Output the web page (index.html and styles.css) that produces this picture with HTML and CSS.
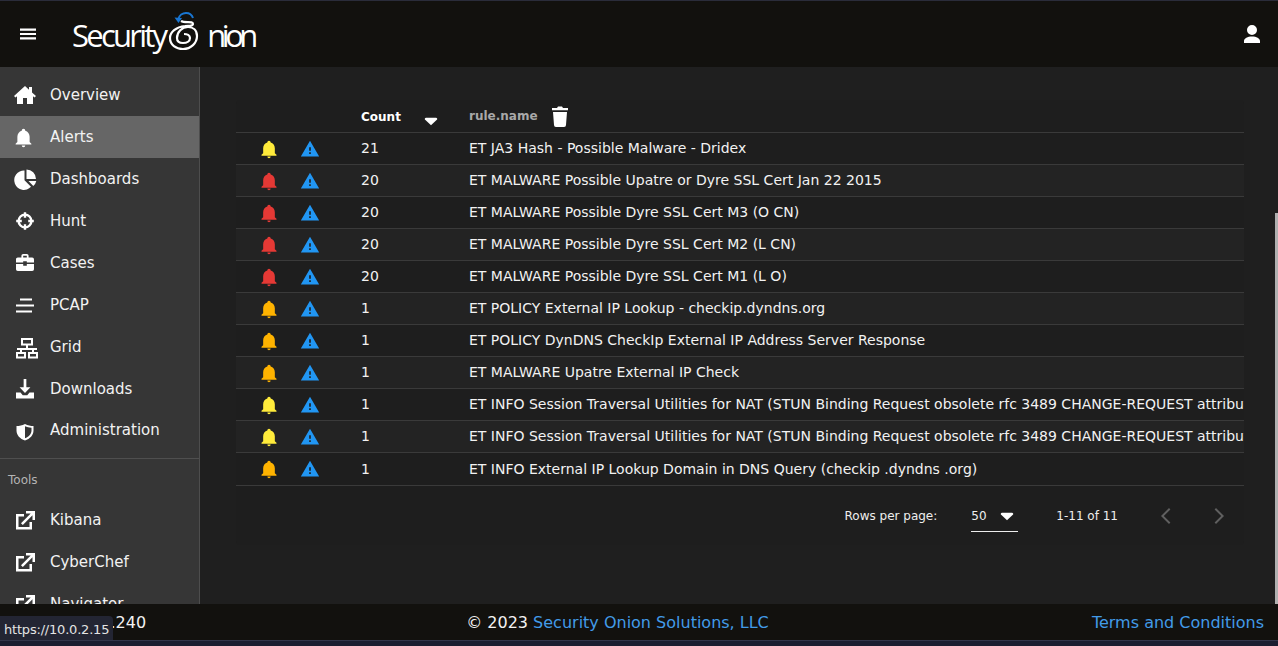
FILE: index.html
```html
<!DOCTYPE html>
<html lang="en">
<head>
<meta charset="utf-8">
<title>Security Onion - Alerts</title>
<link rel="stylesheet" href="styles.css">
</head>
<body>
<svg class="defs" aria-hidden="true">
  <symbol id="i-menu" viewBox="0 0 24 24"><path d="M4 6.500h16v2.200H4zM4 10.900h16v2.200H4zM4 15.300h16v2.200H4z"/></symbol>
  <symbol id="i-user" viewBox="0 0 24 24"><path d="M12 3a5 5 0 1 1 0 10 5 5 0 0 1 0-10zm0 11.500c4.420 0 8 2 8 4.500v2H4v-2c0-2.500 3.580-4.500 8-4.500z"/></symbol>
  <symbol id="i-home" viewBox="0 0 24 24"><path d="M12 3 1 13l1.500 1.500L4 13.200V21h6v-6h4v6h6v-7.800l1.500 1.300L23 13l-4-3.600V4h-3v2.700z"/></symbol>
  <symbol id="i-bell" viewBox="0 0 24 24"><path d="M21 19v1H3v-1l2-2v-6c0-3.100 2.030-5.830 5-6.710V4a2 2 0 1 1 4 0v.29c2.970.88 5 3.610 5 6.710v6l2 2zM14 21a2 2 0 0 1-4 0z"/></symbol>
  <symbol id="i-pie" viewBox="0 0 24 24"><path d="M11.500 3.500v9.800l6.500 6.500a9.700 9.700 0 1 1-6.500-16.300zM13.500 2.500a9.500 9.500 0 0 1 9.500 9.500h-9.500zM15.500 14h7.800a9.700 9.700 0 0 1-3 5z"/></symbol>
  <symbol id="i-cross" viewBox="-3 -3 30 30"><g fill="none" stroke="currentColor" stroke-width="3"><circle cx="12" cy="12" r="8"/><path d="M12 1v7M12 16v7M1 12h7M16 12h7"/></g></symbol>
  <symbol id="i-case" viewBox="-1.330 -1.330 26.670 26.670"><path d="M10 2h4a2 2 0 0 1 2 2v2h4a2 2 0 0 1 2 2v3.500H14V10h-4v1.500H2V8c0-1.110.89-2 2-2h4V4a2 2 0 0 1 2-2zm4 4V4h-4v2zM2 13h8v2h4v-2h8v6a2 2 0 0 1-2 2H4a2 2 0 0 1-2-2z"/></symbol>
  <symbol id="i-lines" viewBox="0 0 24 24"><path d="M7 5.500h12v2H7zM3 11.500h18v2H3zM3 17.500h16v2H3z"/></symbol>
  <symbol id="i-grid" viewBox="0 0 24 24"><g fill="none" stroke="currentColor" stroke-width="2"><rect x="9" y="4" width="10" height="5.500"/><path d="M14 9.500v4.500M8 18v-4h12v4M4 14h20"/><rect x="4" y="18" width="8" height="4.500"/><rect x="16" y="18" width="8" height="4.500"/></g></symbol>
  <symbol id="i-down" viewBox="-1.330 -1.330 26.670 26.670"><path d="M10.500 1h3v9H18l-6 6.500L6 10h4.500zM2 16h5l2.500 3h5l2.500-3h5v6.500H2zm16 3.500h2v1.500h-2z"/></symbol>
  <symbol id="i-shield" viewBox="0 0 24 24"><path fill-rule="evenodd" d="M12 6c-3 1.500-5.500 2-8.500 2v4.500c0 4.500 3.500 8.500 8.500 10 5-1.500 8.500-5.500 8.500-10V8c-3 0-5.500-.5-8.500-2zM12 8.200v12c3.500-1.200 6.500-4.200 6.500-7.700V9.700c-2.500-.2-4.500-.7-6.500-1.500z"/></symbol>
  <symbol id="i-out" viewBox="0 0 24 24"><path d="M13 3v2.500h4.700L8 15.200 9.800 17l9.700-9.700V12H22V3zM3 6v15.500h16V14h-2.500v5h-11V8.500H11V6z"/></symbol>
  <symbol id="i-alert" viewBox="0 0 24 24"><path d="M13 14h-2v-4h2m0 8h-2v-2h2M1 21h22L12 2z"/></symbol>
  <symbol id="i-trash" viewBox="0 0 24 24"><path d="M4 4h5l1-1.500h4L15 4h5v2.300H4zM5 8h14l-1 13a2 2 0 0 1-2 2H8a2 2 0 0 1-2-2z"/></symbol>
  <symbol id="i-left" viewBox="0 0 24 24"><path d="M15.400 5.400 14 4l-8 8 8 8 1.400-1.400L8.800 12z"/></symbol>
  <symbol id="i-right" viewBox="0 0 24 24"><path d="M8.600 5.400 10 4l8 8-8 8-1.400-1.400L15.200 12z"/></symbol>
  <symbol id="i-drop" viewBox="0 0 24 24"><path d="M6 8h12a1.500 1.500 0 0 1 1 2.600l-7 6.400-7-6.400A1.500 1.500 0 0 1 6 8z"/></symbol>
</svg>

<div class="chrome-top"></div>
<header class="topbar">
  <svg class="ic menu-btn"><use href="#i-menu"/></svg>
  <div class="logo">
    <span class="logo-a">Security</span>
    <svg class="spiral" viewBox="0 0 36 42" fill="none">
      <path class="spiral-blue" d="M10 10C11 5 15 3 18 3C21 3 24 5 25 8"/>
      <path class="spiral-tip" d="M6.500 7.500 14 8l-3.500 5z"/>
      <path class="spiral-white" d="M13 11C17 13.500 25 10.500 25 14C25 16.500 20 15.500 17 16C8 17 2 22 2 28C2 35 8 39 15 39C23 39 29 33 29 26C29 20 25 17 20 17C14 17 9 22 9 28C9 31 11 33 15 33C19 33 22 31 22 28C22 25.500 19 24 16 24"/>
    </svg>
    <span class="logo-b">nion</span>
  </div>
  <svg class="ic user-btn"><use href="#i-user"/></svg>
</header>

<div class="middle">
  <nav class="sidebar">
    <a class="nav-item"><svg class="ic"><use href="#i-home"/></svg>Overview</a>
    <a class="nav-item active"><svg class="ic"><use href="#i-bell"/></svg>Alerts</a>
    <a class="nav-item"><svg class="ic"><use href="#i-pie"/></svg>Dashboards</a>
    <a class="nav-item"><svg class="ic"><use href="#i-cross"/></svg>Hunt</a>
    <a class="nav-item"><svg class="ic"><use href="#i-case"/></svg>Cases</a>
    <a class="nav-item"><svg class="ic"><use href="#i-lines"/></svg>PCAP</a>
    <a class="nav-item"><svg class="ic"><use href="#i-grid"/></svg>Grid</a>
    <a class="nav-item"><svg class="ic"><use href="#i-down"/></svg>Downloads</a>
    <a class="nav-item short"><svg class="ic"><use href="#i-shield"/></svg>Administration</a>
    <div class="nav-div"></div>
    <div class="nav-head">Tools</div>
    <a class="nav-item"><svg class="ic"><use href="#i-out"/></svg>Kibana</a>
    <a class="nav-item"><svg class="ic"><use href="#i-out"/></svg>CyberChef</a>
    <a class="nav-item"><svg class="ic"><use href="#i-out"/></svg>Navigator</a>
  </nav>

  <main class="content">
    <div class="scroll-thumb"></div>
    <div class="table-card">
      <div class="row head">
        <span class="c-bell"></span>
        <span class="c-alert"></span>
        <span class="c-count th-on">Count<svg class="ic sort"><use href="#i-drop"/></svg></span>
        <span class="c-name th-off">rule.name<svg class="ic trash"><use href="#i-trash"/></svg></span>
      </div>
      <div class="row"><span class="c-bell"><svg class="ic yellow"><use href="#i-bell"/></svg></span><span class="c-alert"><svg class="ic blue"><use href="#i-alert"/></svg></span><span class="c-count">21</span><span class="c-name">ET JA3 Hash - Possible Malware - Dridex</span></div>
      <div class="row alt"><span class="c-bell"><svg class="ic red"><use href="#i-bell"/></svg></span><span class="c-alert"><svg class="ic blue"><use href="#i-alert"/></svg></span><span class="c-count">20</span><span class="c-name">ET MALWARE Possible Upatre or Dyre SSL Cert Jan 22 2015</span></div>
      <div class="row"><span class="c-bell"><svg class="ic red"><use href="#i-bell"/></svg></span><span class="c-alert"><svg class="ic blue"><use href="#i-alert"/></svg></span><span class="c-count">20</span><span class="c-name">ET MALWARE Possible Dyre SSL Cert M3 (O CN)</span></div>
      <div class="row alt"><span class="c-bell"><svg class="ic red"><use href="#i-bell"/></svg></span><span class="c-alert"><svg class="ic blue"><use href="#i-alert"/></svg></span><span class="c-count">20</span><span class="c-name">ET MALWARE Possible Dyre SSL Cert M2 (L CN)</span></div>
      <div class="row"><span class="c-bell"><svg class="ic red"><use href="#i-bell"/></svg></span><span class="c-alert"><svg class="ic blue"><use href="#i-alert"/></svg></span><span class="c-count">20</span><span class="c-name">ET MALWARE Possible Dyre SSL Cert M1 (L O)</span></div>
      <div class="row alt"><span class="c-bell"><svg class="ic amber"><use href="#i-bell"/></svg></span><span class="c-alert"><svg class="ic blue"><use href="#i-alert"/></svg></span><span class="c-count">1</span><span class="c-name">ET POLICY External IP Lookup - checkip.dyndns.org</span></div>
      <div class="row"><span class="c-bell"><svg class="ic amber"><use href="#i-bell"/></svg></span><span class="c-alert"><svg class="ic blue"><use href="#i-alert"/></svg></span><span class="c-count">1</span><span class="c-name">ET POLICY DynDNS CheckIp External IP Address Server Response</span></div>
      <div class="row alt"><span class="c-bell"><svg class="ic amber"><use href="#i-bell"/></svg></span><span class="c-alert"><svg class="ic blue"><use href="#i-alert"/></svg></span><span class="c-count">1</span><span class="c-name">ET MALWARE Upatre External IP Check</span></div>
      <div class="row"><span class="c-bell"><svg class="ic yellow"><use href="#i-bell"/></svg></span><span class="c-alert"><svg class="ic blue"><use href="#i-alert"/></svg></span><span class="c-count">1</span><span class="c-name">ET INFO Session Traversal Utilities for NAT (STUN Binding Request obsolete rfc 3489 CHANGE-REQUEST attribute)</span></div>
      <div class="row alt"><span class="c-bell"><svg class="ic yellow"><use href="#i-bell"/></svg></span><span class="c-alert"><svg class="ic blue"><use href="#i-alert"/></svg></span><span class="c-count">1</span><span class="c-name">ET INFO Session Traversal Utilities for NAT (STUN Binding Request obsolete rfc 3489 CHANGE-REQUEST attribute)</span></div>
      <div class="row last"><span class="c-bell"><svg class="ic amber"><use href="#i-bell"/></svg></span><span class="c-alert"><svg class="ic blue"><use href="#i-alert"/></svg></span><span class="c-count">1</span><span class="c-name">ET INFO External IP Lookup Domain in DNS Query (checkip .dyndns .org)</span></div>
      <div class="pager">
        <span class="pager-label">Rows per page:</span>
        <span class="pager-select">50<svg class="ic"><use href="#i-drop"/></svg></span>
        <span class="pager-range">1-11 of 11</span>
        <svg class="ic pager-arrow"><use href="#i-left"/></svg>
        <svg class="ic pager-arrow"><use href="#i-right"/></svg>
      </div>
    </div>
  </main>
</div>

<footer class="footer">
  <span class="version">2.4.240</span>
  <span class="copy">© 2023 <a>Security Onion Solutions, LLC</a></span>
  <a class="terms">Terms and Conditions</a>
  <div class="status-tip">https://10.0.2.15</div>
</footer>
<div class="chrome-bottom"></div>
</body>
</html>
```

FILE: styles.css
```css
* { box-sizing: border-box; }
html, body { height: 100%; }
body {
  margin: 0;
  height: 646px;
  overflow: hidden;
  display: flex;
  flex-direction: column;
  background: #1f1f1f;
  color: #f2f2f2;
  font-family: "DejaVu Sans", sans-serif;
  font-size: 14px;
}
.defs { display: none; }
symbol { overflow: visible; }
.ic { display: block; fill: currentColor; flex: none; width: 24px; height: 24px; overflow: visible; }

.chrome-top { height: 1px; background: #2a2c3a; flex: none; }
.chrome-bottom { height: 6px; background: #1b1d30; border-top: 1px solid #33354a; flex: none; }

.topbar {
  flex: none;
  height: 66px;
  display: flex;
  align-items: center;
  padding: 0 14px 0 16px;
  background: #12110e;
  color: #fff;
}
.user-btn { margin-left: auto; }
.logo {
  display: flex;
  align-items: center;
  margin-left: 32px;
  font-family: "Open Sans", sans-serif;
  font-weight: 400;
  font-size: 31px;
  line-height: 36px;
  color: #fff;
  margin-top: 1px;
}
.logo-a { letter-spacing: -2.750px; }
.logo-b { letter-spacing: -4.500px; }
.spiral { flex: none; width: 36px; height: 42px; margin: -7px 3px 0 3px; }
.spiral-blue { stroke: #1976d2; stroke-width: 2; }
.spiral-tip { fill: #1976d2; }
.spiral-white { stroke: #fff; stroke-width: 2.200; }

.middle { flex: 1; min-height: 0; display: flex; }

.sidebar {
  flex: none;
  width: 200px;
  background: #363636;
  border-right: 1px solid #4d4d4d;
  overflow: hidden;
  padding-top: 7px;
}
.nav-item {
  display: flex;
  align-items: center;
  height: 42px;
  padding-left: 13px;
  font-size: 15px;
  color: #f2f2f2;
}
.nav-item.short { height: 40px; }
.nav-item .ic { width: 24px; height: 24px; margin-right: 13px; color: #fff; }
.nav-item.active { background: #666; }
.nav-item.active .ic { width: 21px; height: 21px; margin-right: 16px; }
.nav-div { border-top: 1px solid #4f4f4f; margin-top: 8px; }
.nav-head {
  height: 40px;
  padding: 14px 0 0 8px;
  font-size: 12px;
  line-height: 14px;
  color: #b4b4b4;
}

.content {
  flex: 1;
  min-width: 0;
  position: relative;
  padding: 33px 34px 0 36px;
}
.scroll-thumb {
  position: absolute;
  top: 146px;
  right: 0;
  bottom: 0;
  width: 3px;
  background: #b0b0b0;
}
.table-card {
  overflow: hidden;
  border-radius: 4px;
  background: #1e1e1e;
}
.row {
  display: flex;
  align-items: center;
  height: 32px;
  border-bottom: 1px solid #3a3a3a;
  white-space: nowrap;
  font-size: 14px;
}
.row.alt { background: #232323; }
.row.last { height: 33px; }
.row.head { height: 33px; font-size: 12px; font-weight: 700; }
.c-bell { width: 63px; flex: none; display: flex; justify-content: flex-end; padding-right: 20px; }
.c-alert { width: 40px; flex: none; display: flex; justify-content: flex-end; }
.c-alert .ic { margin-right: 19px; }
.c-count { width: 130px; flex: none; padding-left: 22px; padding-bottom: 2px; display: flex; align-items: center; }
.c-name { flex: none; padding-bottom: 2px; display: flex; align-items: center; }
.row.head .c-count, .row.head .c-name, .row.last .c-count, .row.last .c-name { padding-bottom: 0; }
.c-bell .ic, .c-alert .ic { width: 20px; height: 20px; }
.yellow { color: #ffeb3b; }
.red { color: #e53935; }
.amber { color: #ffb300; }
.blue { color: #2196f3; }
.th-on { color: #fff; padding-top: 1px; }
.th-off { color: #a8a8a8; }
.sort { width: 20px; height: 20px; margin-left: 20px; margin-top: 8px; color: #fff; }
.trash { width: 24px; height: 24px; margin-left: 10px; color: #fff; }

.pager {
  display: flex;
  align-items: center;
  justify-content: flex-end;
  height: 59px;
  font-size: 12px;
  color: #eee;
  padding-right: 14px;
}
.pager-label { margin-right: 34px; }
.pager-select {
  display: flex;
  align-items: center;
  justify-content: space-between;
  width: 47px;
  height: 30px;
  margin-right: 38px;
  border-bottom: 1px solid #eee;
  margin-top: 2px;
}
.pager-select .ic { width: 20px; height: 20px; margin-right: 1px; color: #fff; }
.pager-range { margin-right: 37px; }
.pager-arrow { color: #5f5f5f; }
.pager-arrow + .pager-arrow { margin-left: 27px; }

.footer {
  flex: none;
  height: 36px;
  position: relative;
  display: flex;
  align-items: center;
  justify-content: space-between;
  padding: 0 14px 0 85px;
  background: #12110e;
  font-size: 16px;
  color: #f2f2f2;
}
.footer a { color: #429be8; }
.copy { margin-left: -3px; }
.status-tip {
  position: absolute;
  left: 0;
  bottom: 0;
  width: 113px;
  height: 24px;
  padding: 5px 0 0 4px;
  background: #232533;
  border-top-right-radius: 4px;
  font-size: 13px;
  letter-spacing: -0.200px;
  line-height: 17px;
  color: #e4e4e4;
  white-space: nowrap;
}
```
